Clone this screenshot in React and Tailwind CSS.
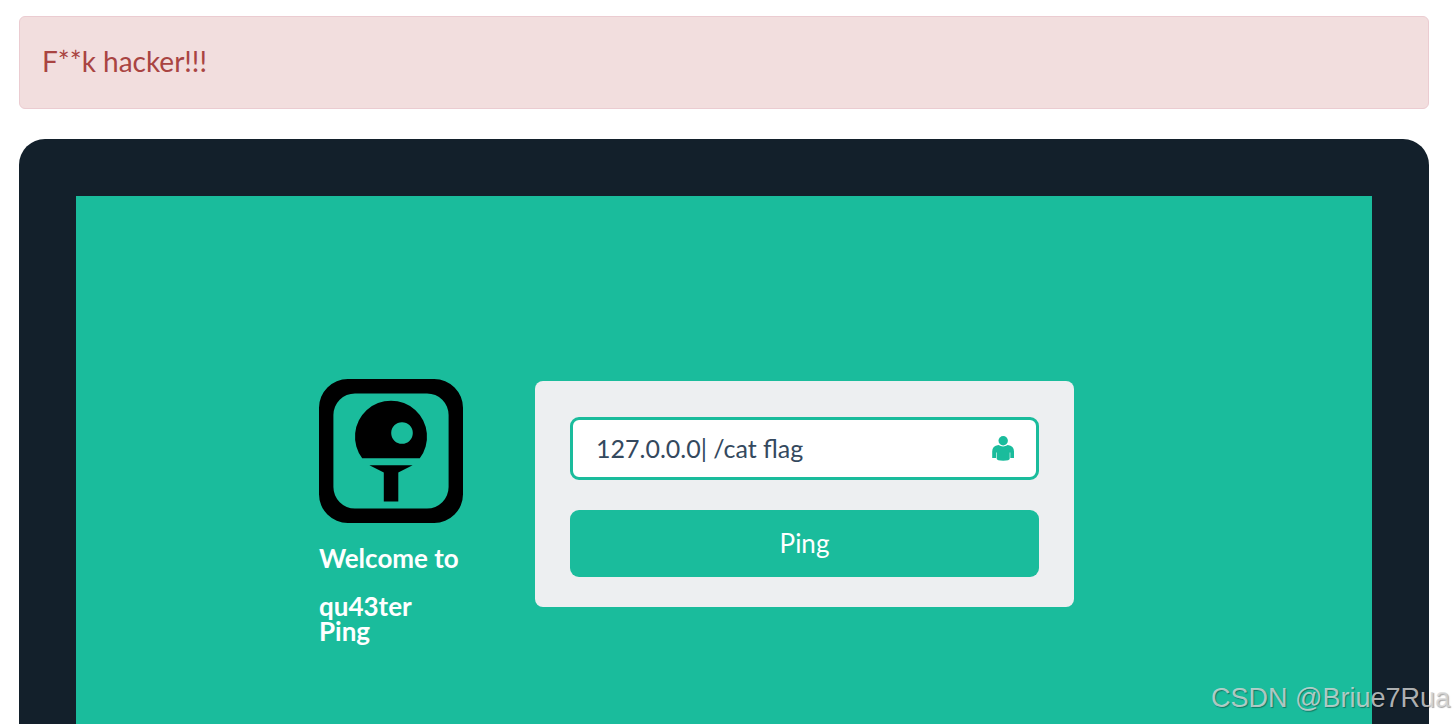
import React, { useState } from 'react';

const PaddleLogo = () => (
  <svg viewBox="0 0 144 144" className="w-36 h-36" role="img" aria-label="Ping logo">
    <path
      fillRule="evenodd"
      d="M28.8 0H115.2A28.8 28.8 0 0 1 144 28.8V115.2A28.8 28.8 0 0 1 115.2 144H28.8A28.8 28.8 0 0 1 0 115.2V28.8A28.8 28.8 0 0 1 28.8 0ZM36 14.4A21.6 21.6 0 0 0 14.4 36V108A21.6 21.6 0 0 0 36 129.6H108A21.6 21.6 0 0 0 129.6 108V36A21.6 21.6 0 0 0 108 14.4Z"
    />
    <path
      fillRule="evenodd"
      d="M43.2 79.3A36 36 0 1 1 100.8 79.3ZM83 43.2A10.8 10.8 0 1 0 83 64.8A10.8 10.8 0 1 0 83 43.2Z"
    />
    <path d="M50.4 86.3H93.6L79.3 93.6V122.4H64.8V93.6Z" />
  </svg>
);

const UserIcon = () => (
  <svg viewBox="0 0 22 25" className="w-[22px] h-[25px] fill-[#1abc9c]" aria-hidden="true">
    <circle cx="11.2" cy="4.7" r="4.7" />
    <path d="M6.5 9Q11 11.8 15.8 9Q22 9.6 22 15.5V22H18.3V16.5H17.7V22.8Q17.7 24.7 11.2 24.7Q4.7 24.7 4.7 22.8V16.5H4.1V22H0.2V15.5Q0.2 9.6 6.5 9Z" />
  </svg>
);

const App = () => {
  const [ip, setIp] = useState('127.0.0.0| /cat flag');

  return (
    <div className="min-h-screen flex flex-col bg-white pt-4 pl-[19px] pr-[25px] font-['Lato',sans-serif]">
      <div
        role="alert"
        className="mb-[30px] rounded-md border border-[#ebccd1] bg-[#f2dede] px-[22px] pt-[27px] pb-[29px] text-[28px] leading-[35px] text-[#a94442]"
      >
        F**k hacker!!!
      </div>

      <main className="flex-1 flex flex-col rounded-t-[26px] bg-[#13202b] px-[57px] pt-[57px]">
        <div className="flex-1 flex items-start gap-[72px] bg-[#1abc9c] pt-[183px] pl-[243px] pr-[298px]">
          <div className="w-36 shrink-0 text-white">
            <PaddleLogo />
            <h1 className="mt-[23px] text-[26px] leading-[25px] font-bold">
              Welcome to
              <small className="mt-[23px] block text-[26px] leading-[25px]">qu43ter Ping</small>
            </h1>
          </div>

          {/* Ping form */}
          <form
            onSubmit={(e) => e.preventDefault()}
            className="mt-0.5 flex-1 rounded-lg bg-[#edeff1] px-[35px] pt-9 pb-[30px]"
          >
            <div className="flex h-[63px] items-center rounded-[9px] border-3 border-[#1abc9c] bg-white pl-[23px] pr-[22px]">
              <input
                type="text"
                aria-label="IP address"
                value={ip}
                onChange={(e) => setIp(e.target.value)}
                className="min-w-0 flex-1 bg-transparent text-[25px] leading-[35px] text-[#34495e] outline-none"
              />
              <UserIcon />
            </div>
            <button
              type="submit"
              className="mt-[30px] block h-[67px] w-full rounded-[9px] bg-[#1abc9c] text-[26px] leading-[35px] text-white"
            >
              Ping
            </button>
          </form>
        </div>
      </main>

      {/* Watermark */}
      <div className="absolute right-1 bottom-2 font-['Liberation_Sans',sans-serif] text-[27px] leading-[35px] text-[#d9d9d9]/80 [text-shadow:1px_1px_1px_rgba(0,0,0,0.35)]">
        CSDN @Briue7Rua
      </div>
    </div>
  );
};

export default App;
